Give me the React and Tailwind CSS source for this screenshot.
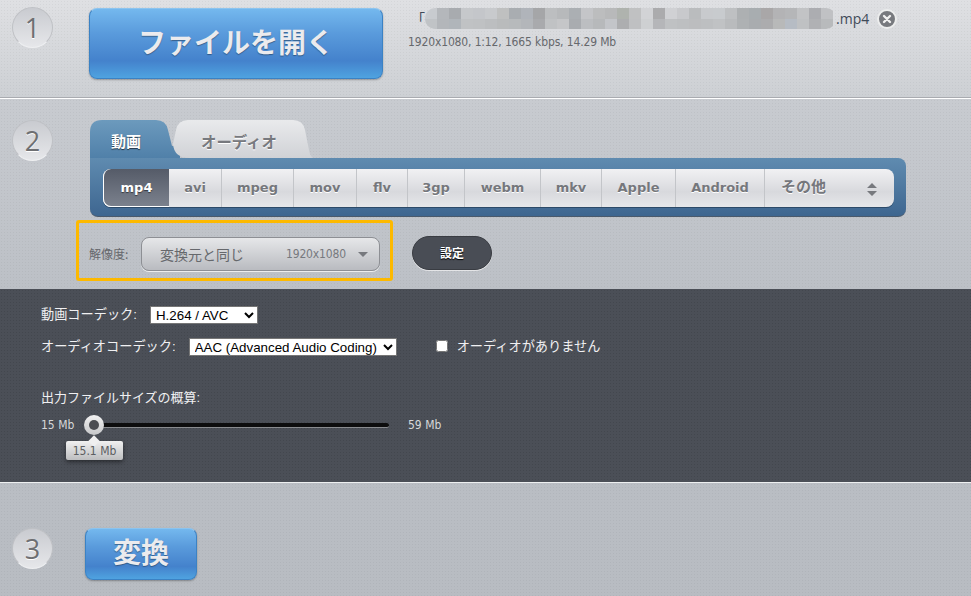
import React from 'react';

const formats = [
    { name: 'avi', w: 'w-[53px]' },
    { name: 'mpeg', w: 'w-[72px]' },
    { name: 'mov', w: 'w-[63px]' },
    { name: 'flv', w: 'w-[51px]' },
    { name: '3gp', w: 'w-[57px]' },
    { name: 'webm', w: 'w-[76px]' },
    { name: 'mkv', w: 'w-[61px]' },
    { name: 'Apple', w: 'w-[74px]' },
    { name: 'Android', w: 'w-[89px]' },
];

// mosaic that hides the file name
const mosaicTop = ['#c8cbcf', '#b4b7bb', '#a8abaf', '#c6c8cb', '#c4c6ca', '#c8cacd', '#bfc0c0', '#a9adb1', '#b0b4ba', '#a5a6a8', '#bcbec0', '#b7b9bb', '#abafb3', '#c4c5c8', '#bcbdbe', '#b8b9ba', '#afb3ae', '#c0c1c2', '#d2d3d6', '#ababad', '#d0d1d4', '#c8c9cc', '#babcbe', '#c8cacd', '#c8cbce', '#bec0c2', '#adb0b2', '#a8adb0', '#a9a7a8', '#b3b3b5', '#b5b6b8', '#c2c3c5', '#acadb1', '#c0c1c4'];
const mosaicBottom = ['#c0c3c6', '#b3b6ba', '#b0b5ba', '#c0c2c4', '#bfc1c3', '#bcbec0', '#b9bbbc', '#b7babc', '#b3b6ba', '#a9aaad', '#c0c2c4', '#c5c6c8', '#a9acb0', '#bcbec1', '#b7b9bb', '#c3c5c9', '#adaeb0', '#bfc0c2', '#ced0d2', '#b5b6b9', '#bfc1c3', '#bdbfc1', '#bcbdbf', '#bdbfc1', '#c0c2c4', '#b9bbbd', '#aeb1b3', '#a9acaf', '#acacae', '#b8b9b9', '#b6bcc4', '#bfc1c3', '#b0b1b4', '#b8babc'];

function Step({ n, className }) {
    return (
        <div className={`w-[41px] h-[41px] shrink-0 rounded-full bg-gradient-to-b from-[#c9cbd0] to-[#e6e7ea] border border-[#bfc1c5] border-b-[#eeeff1] flex items-center justify-center text-[27px] leading-none text-[#6e6f72] font-['Open_Sans',sans-serif] [text-shadow:0_1px_0_#fff] ${className || ''}`}>
            {n}
        </div>
    );
}

function BlueButton({ children, className }) {
    return (
        <button className={`shrink-0 rounded-[8px] border border-[#3b82c4] border-t-[#8cc4ef] bg-[linear-gradient(#74b8ee_0%,#5a9bdc_35%,#4482cc_75%,#4fa3e0_100%)] shadow-[0_1px_2px_rgba(0,0,0,0.3)] font-bold text-[#ebebee] font-['Noto_Sans_CJK_JP',sans-serif] [text-shadow:0_1px_1px_rgba(0,0,0,0.35)] ${className}`}>
            {children}
        </button>
    );
}

export default function App() {
    return (
        <div className="w-[971px] h-[596px] overflow-hidden font-['DejaVu_Sans','Noto_Sans_CJK_JP',sans-serif] bg-[image:radial-gradient(circle,rgba(0,0,0,0.045)_1px,transparent_1px),linear-gradient(#dfe0e3_0px,#cdd0d4_97px,#c8cbd0_100px,#bcc0c6_290px,#b8bcc2_100%)] bg-[length:3px_3px,100%_100%]">
            {/* step 1 */}
            <section className="h-[99px] flex items-start pl-3 pt-2 border-b border-b-white shadow-[inset_0_-1px_0_#a9abb0]">
                <Step n="1" className="-mt-[1px]" />
                <BlueButton className="ml-[36px] w-[294px] h-[71px] text-[28px] pb-[5px]">ファイルを開く</BlueButton>
                <div className="ml-[25px]">
                    <div className="flex items-center h-[21px] text-[14px] text-[#3f4a58] font-['Open_Sans','Noto_Sans_CJK_JP',sans-serif]">
                        <span className="w-[17px] text-right">「</span>
                        <div className="w-[411px] h-[21px] rounded-[10px] overflow-hidden flex flex-col">
                            <div className="flex h-[11px]">
                                {mosaicTop.map((c, i) => <div key={i} className="w-[12px] shrink-0" style={{ background: c }} />)}
                            </div>
                            <div className="flex h-[10px]">
                                {mosaicBottom.map((c, i) => <div key={i} className="w-[12px] shrink-0" style={{ background: c }} />)}
                            </div>
                        </div>
                        <span className="w-[34px]">.mp4</span>
                        <div className="ml-[7px] w-[20px] h-[20px] rounded-full bg-[#77797e] border-2 border-[#eceded] flex items-center justify-center">
                            <svg width="10" height="10" viewBox="0 0 10 10">
                                <path d="M2 2 L8 8 M8 2 L2 8" stroke="#f0f0f0" strokeWidth="2.4" strokeLinecap="round" />
                            </svg>
                        </div>
                    </div>
                    <div className="mt-[5px] text-[12px] leading-[16px] tracking-[-0.14px] text-[#66686c] font-['DejaVu_Sans_Condensed','DejaVu_Sans',sans-serif]">1920x1080, 1:12, 1665 kbps, 14.29 Mb</div>
                </div>
            </section>

            {/* step 2 */}
            <section className="h-[190px] flex items-start pl-3 pt-[21px]">
                <Step n="2" />
                <div className="ml-[37px]">
                    <div className="flex h-[38px]">
                        <div className="w-[90px] h-[38px] pl-[21px] pt-[11px] bg-[linear-gradient(#6c9abd,#5080a9)] [clip-path:path('M0_38V12Q0_0_12_0H66Q76_0_78_10L82_26H90V38Z')] text-[15px] leading-[20px] font-bold text-white font-['Noto_Sans_CJK_JP',sans-serif] [text-shadow:0_1px_1px_rgba(0,0,0,0.6)]">動画</div>
                        <div className="-ml-[8px] w-[141px] h-[38px] pl-[29px] pt-[11px] bg-[linear-gradient(#e9eaec,#d0d2d6)] [clip-path:path('M1_24L4_10Q6_0_16_0H121Q131_0_133_10L137_30Q138_36_141_38H18Q2_38_1_24Z')] text-[15.4px] leading-[20px] font-bold text-[#77797e] font-['Noto_Sans_CJK_JP',sans-serif] [text-shadow:0_1px_0_#fff]">オーディオ</div>
                    </div>
                    <div className="w-[816px] h-[59px] rounded-b-[8px] rounded-tr-[8px] bg-[linear-gradient(#5f8bb0,#3e6690)] border-b border-b-[#4a5a6c] pl-[13px] pt-[11px]">
                        <div className="w-[791px] h-[38px] flex rounded-[8px] bg-[linear-gradient(#f1f1f3,#d8d9dd_60%,#e6e7ea)] shadow-[0_1px_0_#2c4a69] text-[13px] font-bold text-[#75777c] [text-shadow:0_1px_0_#fff]">
                            <div className="w-[66px] rounded-l-[8px] flex items-center justify-center text-white bg-[linear-gradient(#555b68,#7b818d)] border-b border-l border-white [text-shadow:0_1px_1px_rgba(0,0,0,0.5)]">mp4</div>
                            {formats.map((f) => (
                                <div key={f.name} className={`${f.w} flex items-center justify-center border-r border-r-[#c3c5c9]`}>{f.name}</div>
                            ))}
                            <div className="flex-1 flex items-center justify-between pl-[16px] pr-[17px] font-['Noto_Sans_CJK_JP',sans-serif] text-[15px]">
                                <span className="-mt-[3px]">その他</span>
                                <svg width="10" height="13" viewBox="0 0 10 13" className="mt-[2px]">
                                    <path d="M5 0 L10 5 H0 Z M0 8 H10 L5 13 Z" fill="#77797e" />
                                </svg>
                            </div>
                        </div>
                    </div>
                    <div className="flex items-center mt-[3px]">
                        <div className="-ml-[14px] w-[317px] h-[61px] border-[3px] border-[#fdb900] rounded-[3px] flex items-center pl-[10px] pt-[7px]">
                            <span className="w-[52px] shrink-0 text-[12px] text-[#66686c] font-['Noto_Sans_CJK_JP',sans-serif]">解像度:</span>
                            <div className="w-[239px] h-[34px] rounded-[8px] border border-[#8d8f94] bg-[linear-gradient(#e6e7e9,#b9bbc0)] shadow-[0_1px_0_#eee] flex items-center pl-[18px] pr-[11px] text-[#66686c]">
                                <span className="flex-1 text-[14px] font-['Noto_Sans_CJK_JP',sans-serif]">変換元と同じ</span>
                                <span className="text-[12px] tracking-[-0.14px] font-['DejaVu_Sans_Condensed','DejaVu_Sans',sans-serif] text-[#77797e]">1920x1080</span>
                                <svg width="10" height="5" viewBox="0 0 10 5" className="ml-[12px]">
                                    <path d="M0 0 H10 L5 5 Z" fill="#77797e" />
                                </svg>
                            </div>
                        </div>
                        <button className="ml-[19px] w-[80px] h-[34px] mt-[4px] rounded-[17px] bg-[#494d55] border border-[#393c42] shadow-[0_1px_0_#e4e5e7] text-[12px] font-bold text-white font-['Noto_Sans_CJK_JP',sans-serif] [text-shadow:0_1px_1px_#000]">設定</button>
                    </div>
                </div>
            </section>

            {/* codec settings */}
            <section className="h-[194px] border-b border-b-[#eef0f1] pl-[41px] pt-[16px] text-[13.2px] text-[#f0f0f2] font-['Liberation_Sans','Noto_Sans_CJK_JP',sans-serif] bg-[#4b4f57] bg-[image:radial-gradient(circle,rgba(0,0,0,0.1)_1px,transparent_1px)] bg-[length:3px_3px]">
                <div className="flex items-center h-[20px]">
                    <span>動画コーデック:</span>
                    <select defaultValue="h264" className="ml-[13px] w-[108px] h-[18px] bg-white text-black text-[13.33px] border border-[#767676] pl-[1px]">
                        <option value="h264">H.264 / AVC</option>
                    </select>
                </div>
                <div className="flex items-center h-[20px] mt-[12px]">
                    <span>オーディオコーデック:</span>
                    <select defaultValue="aac" className="ml-[13px] w-[208px] h-[18px] bg-white text-black text-[13.33px] border border-[#767676] pl-[1px]">
                        <option value="aac">AAC (Advanced Audio Coding)</option>
                    </select>
                    <input type="checkbox" className="ml-[39px] w-[12px] h-[12px] -mt-[3px]" />
                    <span className="ml-[9px]">オーディオがありません</span>
                </div>
                <div className="mt-[31px] h-[20px] flex items-center text-[13px]">出力ファイルサイズの概算:</div>
                <div className="relative flex items-center h-[20px] mt-[7px] text-[12px] text-[#d6d7d9] font-['DejaVu_Sans_Condensed','DejaVu_Sans',sans-serif]">
                    <span className="w-[43px]">15 Mb</span>
                    <div className="w-[20px] h-[20px] rounded-full bg-[linear-gradient(#f2f2f2,#c6c7c9)] flex items-center justify-center shrink-0 z-10">
                        <div className="w-[10px] h-[10px] rounded-full bg-[#4b4d52]" />
                    </div>
                    <div className="-ml-[2px] w-[287px] h-[5px] rounded-full bg-[#0d0d0e] border-b border-b-[#8a8c90]" />
                    <span className="ml-[19px]">59 Mb</span>
                    <div className="absolute left-[25px] top-[26px] w-[57px] h-[19px] rounded-[2px] bg-[linear-gradient(#f0f0f0,#bdbec0)] shadow-[0_2px_4px_rgba(0,0,0,0.45)] text-[#5b5d61] flex items-center justify-center">
                        <div className="absolute -top-[4px] left-[24px] w-[8px] h-[8px] rotate-45 bg-[#f0f0f0]" />
                        <span className="relative">15.1 Mb</span>
                    </div>
                </div>
            </section>

            {/* step 3 */}
            <section className="flex items-start pl-3 pt-[45px]">
                <Step n="3" />
                <BlueButton className="ml-[32px] w-[112px] h-[52px] text-[28px] leading-none pb-[6px]">変換</BlueButton>
            </section>
        </div>
    );
}
